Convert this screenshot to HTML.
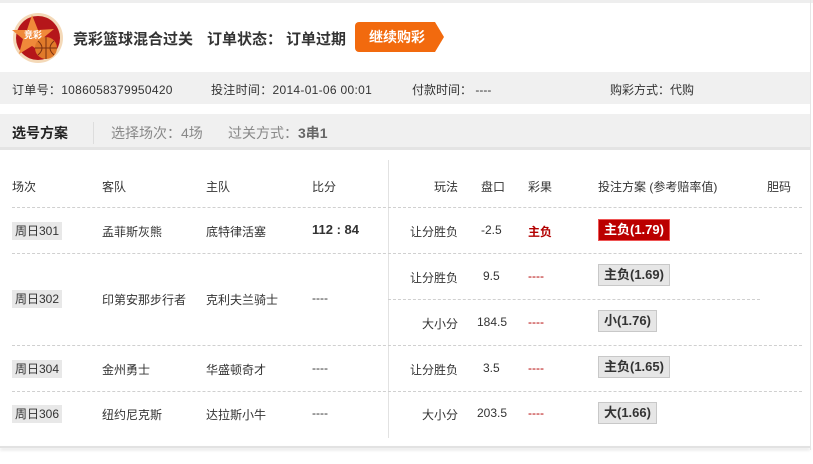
<!DOCTYPE html>
<html><head><meta charset="utf-8"><style>
*{margin:0;padding:0;box-sizing:border-box}
body{width:813px;height:464px;background:#fff;font-family:"Liberation Sans","Noto Sans CJK SC",sans-serif;font-size:12px;color:#333;position:relative;overflow:hidden}
.a{position:absolute;white-space:nowrap}
.dl{position:absolute;height:0;border-top:1px dashed #d0d0d0}
.b{position:absolute;height:22px;line-height:20px;border:1px solid #c8c8c8;background:#e6e6e6;font-weight:bold;font-size:13px;padding:0 5px;color:#333}
.r{color:#b30000}
.t{position:absolute;background:#e8e8e8;height:18px;line-height:18px;padding:0 3px;font-size:12px}
</style></head><body>
<div class="a" style="left:0;top:0;width:813px;height:3px;background:#eee"></div>
<div class="a" style="left:810px;top:0;width:1px;height:450px;background:#e6e6e6"></div>
<svg class="a" style="left:12px;top:12px" width="52" height="52" viewBox="0 0 52 52">
<circle cx="26" cy="26" r="25" fill="#f4d9b8"/><circle cx="26" cy="26" r="22" fill="#b5161a"/>
<polygon points="20,3 26,18 42,17 30,27 35,44 20,34 7,42 11,27 0,18 15,18" fill="#f08a3a"/>
<circle cx="34" cy="36" r="11" fill="#e07a2a"/><path d="M23 36h22M34 25v22M26 29q8 7 0 14M42 29q-8 7 0 14" stroke="#7a3010" fill="none" stroke-width="1"/>
<text x="12" y="26" font-size="9" fill="#fff" font-weight="bold" font-family="Noto Sans CJK SC">竞彩</text>
</svg>
<div class="a" style="left:73px;top:28px;font-size:15px;font-weight:bold;color:#333">竞彩篮球混合过关</div>
<div class="a" style="left:207px;top:28px;font-size:15px;font-weight:bold;color:#333">订单状态：</div>
<div class="a" style="left:286px;top:28px;font-size:15px;font-weight:bold;color:#333">订单过期</div>
<div class="a" style="left:355px;top:22px;width:80px;height:30px;background:#f26a0e;border-radius:4px 0 0 4px;color:#fff;font-size:14px;font-weight:bold;line-height:30px;padding-left:14px">继续购彩</div>
<div class="a" style="left:435px;top:22px;width:0;height:0;border-top:15px solid transparent;border-bottom:15px solid transparent;border-left:9px solid #f26a0e"></div>
<div class="a" style="left:0;top:72px;width:810px;height:32px;background:#f0f0f0"></div>
<div class="a" style="left:12px;top:81px;letter-spacing:0.3px">订单号：1086058379950420</div>
<div class="a" style="left:211px;top:81px;letter-spacing:0.3px">投注时间：2014-01-06 00:01</div>
<div class="a" style="left:412px;top:81px">付款时间：&nbsp;----</div>
<div class="a" style="left:610px;top:81px">购彩方式：代购</div>
<div class="a" style="left:0;top:114px;width:810px;height:36px;background:#f0f0f0;border-bottom:3px solid #e4e4e4"></div>
<div class="a" style="left:12px;top:123px;font-size:14px;font-weight:bold;color:#222">选号方案</div>
<div class="a" style="left:93px;top:122px;width:1px;height:22px;background:#ddd"></div>
<div class="a" style="left:111px;top:123px;font-size:14px;color:#888">选择场次：4场</div>
<div class="a" style="left:228px;top:123px;font-size:14px;color:#888">过关方式：<b style="color:#666">3串1</b></div>
<div class="a" style="left:388px;top:160px;width:1px;height:278px;background:#e2e2e2"></div>
<div class="a" style="left:12px;top:178px">场次</div><div class="a" style="left:102px;top:178px">客队</div><div class="a" style="left:206px;top:178px">主队</div><div class="a" style="left:312px;top:178px">比分</div>
<div class="a" style="left:434px;top:178px">玩法</div><div class="a" style="left:481px;top:178px">盘口</div><div class="a" style="left:528px;top:178px">彩果</div><div class="a" style="left:598px;top:178px">投注方案 (参考赔率值)</div><div class="a" style="left:767px;top:178px">胆码</div>
<div class="dl" style="left:12px;top:207px;width:790px"></div>
<div class="dl" style="left:12px;top:253px;width:790px"></div>
<div class="dl" style="left:388px;top:299px;width:372px"></div>
<div class="dl" style="left:12px;top:345px;width:790px"></div>
<div class="dl" style="left:12px;top:391px;width:790px"></div>
<div class="t" style="left:12px;top:222px">周日301</div><div class="a" style="left:102px;top:223px">孟菲斯灰熊</div><div class="a" style="left:206px;top:223px">底特律活塞</div><div class="a" style="left:312px;top:222px;font-weight:bold;font-size:13px">112 : 84</div>
<div class="t" style="left:12px;top:290px">周日302</div><div class="a" style="left:102px;top:291px">印第安那步行者</div><div class="a" style="left:206px;top:291px">克利夫兰骑士</div><div class="a" style="left:312px;top:291px">----</div>
<div class="t" style="left:12px;top:360px">周日304</div><div class="a" style="left:102px;top:361px">金州勇士</div><div class="a" style="left:206px;top:361px">华盛顿奇才</div><div class="a" style="left:312px;top:361px">----</div>
<div class="t" style="left:12px;top:405px">周日306</div><div class="a" style="left:102px;top:406px">纽约尼克斯</div><div class="a" style="left:206px;top:406px">达拉斯小牛</div><div class="a" style="left:312px;top:406px">----</div>
<div class="a" style="left:410px;top:223px">让分胜负</div><div class="a" style="left:481px;top:223px">-2.5</div><div class="a r" style="left:528px;top:223px;font-weight:bold">主负</div><div class="b" style="left:598px;top:219px;background:#b00;border-color:#e55;color:#fff">主负(1.79)</div>
<div class="a" style="left:410px;top:269px">让分胜负</div><div class="a" style="left:483px;top:269px">9.5</div><div class="a r" style="left:528px;top:269px">----</div><div class="b" style="left:598px;top:264px">主负(1.69)</div>
<div class="a" style="left:422px;top:315px">大小分</div><div class="a" style="left:477px;top:315px">184.5</div><div class="a r" style="left:528px;top:315px">----</div><div class="b" style="left:598px;top:310px">小(1.76)</div>
<div class="a" style="left:410px;top:361px">让分胜负</div><div class="a" style="left:483px;top:361px">3.5</div><div class="a r" style="left:528px;top:361px">----</div><div class="b" style="left:598px;top:356px">主负(1.65)</div>
<div class="a" style="left:422px;top:406px">大小分</div><div class="a" style="left:477px;top:406px">203.5</div><div class="a r" style="left:528px;top:406px">----</div><div class="b" style="left:598px;top:402px">大(1.66)</div>
<div class="a" style="left:0;top:446px;width:810px;height:2px;background:#e2e2e2;box-shadow:0 2px 3px #ddd"></div>
</body></html>
